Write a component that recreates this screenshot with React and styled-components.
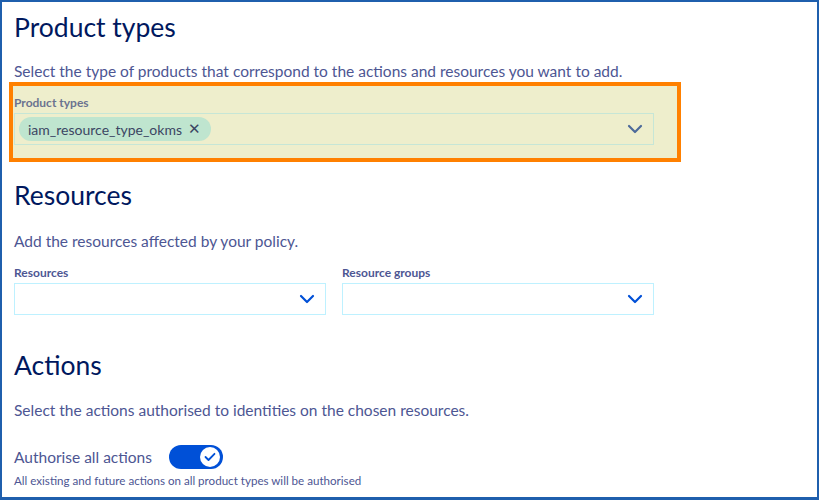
import React from 'react';
import styled, { createGlobalStyle } from 'styled-components';

const GlobalStyle = createGlobalStyle`
  html, body { margin: 0; padding: 0; background: #fff; }
  body { font-family: Lato, "Source Sans Pro", "Noto Sans", sans-serif; }
  * { box-sizing: border-box; }
`;

const Frame = styled.div`
  width: 819px;
  height: 500px;
  border: 2px solid #1f5fad;
  border-bottom-width: 3px;
  padding: 8px 12px 0 12px;
  overflow: hidden;
`;

const Section = styled.section`
  width: 640px;
  & + & { margin-top: 33px; }
`;

const Title = styled.h2`
  margin: 0;
  font-size: 26.5px;
  line-height: 34px;
  font-weight: 400;
  color: #00185e;
`;

const Desc = styled.p`
  margin: ${p => p.$top || 16}px 0 0;
  font-size: 15.5px;
  line-height: 22px;
  color: #4d5693;
`;

const Highlight = styled.div`
  margin: 0 -27px -17px -5px;
  padding: 9px 23px 13px 1px;
  border: 4px solid #ff8000;
  background: #eeeecc;
`;

const Row = styled.div`
  display: flex;
  gap: 16px;
  margin-top: ${p => p.$top || 0}px;
`;

const Field = styled.div`
  flex: 1;
  min-width: 0;
`;

const Label = styled.div`
  font-size: 12px;
  line-height: 16px;
  font-weight: 700;
  color: ${p => (p.$muted ? '#6b7390' : '#4d5693')};
  margin-bottom: 2px;
`;

const SelectBox = styled.div`
  height: 32px;
  display: flex;
  align-items: center;
  padding: 0 10px 0 4px;
  border: 1px solid ${p => (p.$muted ? '#c6e6d6' : '#bef1ff')};
  background: ${p => (p.$muted ? 'transparent' : '#fff')};
`;

const Values = styled.div`
  flex: 1;
  display: flex;
  align-items: center;
`;

const Chip = styled.span`
  display: inline-flex;
  align-items: center;
  gap: 6px;
  height: 24px;
  padding: 0 10px 0 9px;
  border-radius: 12px;
  background: #bfe5cf;
  color: #3b4663;
  font-size: 14px;
`;

const Close = styled.span`
  font-size: 15px;
  line-height: 1;
  font-family: "DejaVu Sans", sans-serif;
  color: #3b4663;
`;

const Chevron = ({ color }) => (
  <svg width="16" height="10" viewBox="0 0 16 10">
    <path d="M2 2 L8 8 L14 2" fill="none" stroke={color} strokeWidth="2.2" strokeLinecap="round" strokeLinejoin="round" />
  </svg>
);

const ToggleRow = styled.div`
  display: flex;
  align-items: center;
  gap: 17px;
  margin-top: 24px;
`;

const ToggleText = styled.span`
  font-size: 15.5px;
  line-height: 24px;
  color: #4d5693;
`;

const Switch = styled.span`
  width: 54px;
  height: 24px;
  border-radius: 12px;
  background: #0050d7;
  display: flex;
  align-items: center;
  justify-content: flex-end;
  padding-right: 3px;
`;

const Knob = styled.span`
  width: 20px;
  height: 20px;
  border-radius: 50%;
  background: #fff;
  display: flex;
  align-items: center;
  justify-content: center;
`;

const Hint = styled.div`
  margin-top: 5px;
  font-size: 11.6px;
  line-height: 14px;
  color: #4d5693;
`;

function Select({ muted, children }) {
  return (
    <SelectBox $muted={muted}>
      <Values>{children}</Values>
      <Chevron color={muted ? '#4d6a9a' : '#0050d7'} />
    </SelectBox>
  );
}

export default function App() {
  return (
    <>
      <GlobalStyle />
      <Frame>
        <Section>
          <Title>Product types</Title>
          <Desc>Select the type of products that correspond to the actions and resources you want to add.</Desc>
          <Highlight>
            <Label $muted>Product types</Label>
            <Select muted>
              <Chip>
                iam_resource_type_okms
                <Close>✕</Close>
              </Chip>
            </Select>
          </Highlight>
        </Section>

        <Section>
          <Title>Resources</Title>
          <Desc $top={18}>Add the resources affected by your policy.</Desc>
          <Row $top={13}>
            <Field>
              <Label>Resources</Label>
              <Select />
            </Field>
            <Field>
              <Label>Resource groups</Label>
              <Select />
            </Field>
          </Row>
        </Section>

        <Section>
          <Title>Actions</Title>
          <Desc $top={17}>Select the actions authorised to identities on the chosen resources.</Desc>
          <ToggleRow>
            <ToggleText>Authorise all actions</ToggleText>
            <Switch>
              <Knob>
                <svg width="12" height="10" viewBox="0 0 12 10">
                  <path d="M1.5 5 L4.5 8 L10.5 1.8" fill="none" stroke="#0050d7" strokeWidth="1.8" strokeLinecap="round" strokeLinejoin="round" />
                </svg>
              </Knob>
            </Switch>
          </ToggleRow>
          <Hint>All existing and future actions on all product types will be authorised</Hint>
        </Section>
      </Frame>
    </>
  );
}
